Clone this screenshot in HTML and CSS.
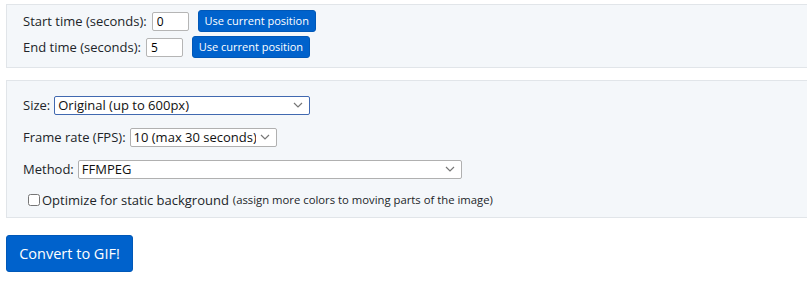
FILE: index.html
```html
<!DOCTYPE html>
<html>
<head>
    <title>Convert to GIF</title>
    <link rel="stylesheet" href="styles.css">
</head>
<body>
    <div class="panel panel-times">
        <div class="row">
            <label>Start time (seconds): <input type="text" class="num" value="0"></label>
            <button class="btn-small">Use current position</button>
        </div>
        <div class="row">
            <label>End time (seconds): <input type="text" class="num" value="5"></label>
            <button class="btn-small">Use current position</button>
        </div>
    </div>

    <div class="panel panel-options">
        <div class="row">
            <label>Size:
                <select class="sel sel-size focused">
                    <option>Original (up to 600px)</option>
                </select>
            </label>
        </div>
        <div class="row">
            <label>Frame rate (FPS):
                <select class="sel sel-fps">
                    <option>10 (max 30 seconds)</option>
                </select>
            </label>
        </div>
        <div class="row">
            <label>Method:
                <select class="sel sel-method">
                    <option>FFMPEG</option>
                </select>
            </label>
        </div>
        <div class="row check-row">
            <label><input type="checkbox" class="check">Optimize for static background <small>(assign more colors to moving parts of the image)</small></label>
        </div>
    </div>

    <button class="btn-primary">Convert to GIF!</button>
</body>
</html>
```

FILE: styles.css
```css
html, body {
    overflow: hidden;
}
body {
    font-family: "Open Sans", Arial, sans-serif;
    font-size: 13px;
    line-height: 18px;
    color: #212529;
    margin: 0;
    padding: 4px 0 0 6px;
}
.panel {
    background-color: #f4f7fa;
    border: 1px solid #e1e5e9;
    border-right: none;
    margin-right: -20px;
    padding: 0 16px;
}
.panel-times {
    padding-top: 3px;
    padding-bottom: 7px;
}
.panel-times .row {
    display: flex;
    align-items: center;
    height: 26px;
}
.panel-options {
    margin-top: 12px;
    padding-top: 8px;
    padding-bottom: 2px;
}
.panel-options .row {
    display: flex;
    align-items: center;
    height: 32px;
}
.panel-options .check-row {
    height: 30px;
}
label {
    display: flex;
    align-items: center;
    gap: 4px;
}
.num {
    width: 37px;
    height: 19px;
    box-sizing: border-box;
    border: 1px solid #b5b5b5;
    border-radius: 2px;
    padding: 0 4px;
    font: inherit;
    font-size: 12px;
    margin-left: 1px;
}
.btn-small {
    margin-left: 9px;
    width: 118px;
    height: 22px;
    padding: 0;
    background-color: #0062cc;
    color: white;
    border: 1px solid #0058b8;
    border-radius: 3px;
    font: inherit;
    font-size: 11px;
    cursor: pointer;
}
.sel {
    appearance: none;
    height: 19px;
    box-sizing: border-box;
    border: 1px solid #b0b0b0;
    border-radius: 2px;
    background: white url("data:image/svg+xml,%3Csvg xmlns='http://www.w3.org/2000/svg' width='10' height='6'%3E%3Cpath d='M1 1l4 4 4-4' fill='none' stroke='%23777' stroke-width='1.2'/%3E%3C/svg%3E") no-repeat right 6px center;
    padding: 0 20px 0 3px;
    font: inherit;
    font-size: 13px;
    line-height: 17px;
    color: #111;
}
.sel.focused {
    border-color: #4169b0;
}
.sel-size { width: 256px; }
.sel-fps { width: 147px; }
.sel-method { width: 384px; }
.check-row label {
    gap: 0;
}
.check {
    width: 12px;
    height: 12px;
    margin: 0 2px 0 5px;
}
small {
    font-size: 11.3px;
    margin-left: 4px;
}
.btn-primary {
    display: block;
    margin-top: 17px;
    width: 127px;
    height: 37px;
    background-color: #0062cc;
    color: white;
    border: 1px solid #0058b8;
    border-radius: 3px;
    font: inherit;
    font-size: 14.5px;
    cursor: pointer;
}
```
